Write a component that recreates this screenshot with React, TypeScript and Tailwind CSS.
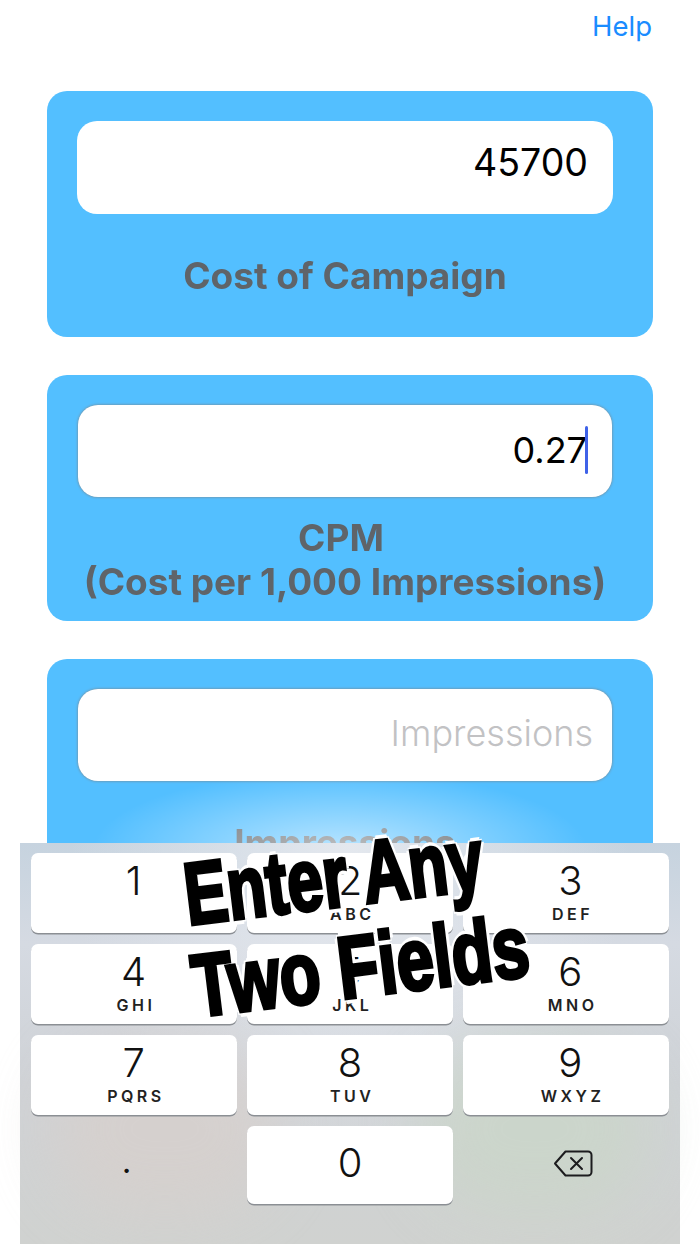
import React from 'react';

const font = "font-['Inter','Noto_Sans',sans-serif]";

const keys = [
  [['1', ''], ['2', 'ABC'], ['3', 'DEF']],
  [['4', 'GHI'], ['5', 'JKL'], ['6', 'MNO']],
  [['7', 'PQRS'], ['8', 'TUV'], ['9', 'WXYZ']],
];

// the glyphs sit a little right of centre in the outer keys
const colShift = ['', '', 'pl-[8px]'];

const Key: React.FC<{ digit: string; letters: string; col: number }> = ({ digit, letters, col }) => (
  <div className={`flex h-[80px] flex-col items-center rounded-[7px] bg-white shadow-[0_1.5px_0_#8b8f94] ${colShift[col]}`}>
    <span className="mt-[4px] h-[48px] text-[40px] leading-[48px] font-light text-[#111]">{digit}</span>
    <span className="pl-[4.5px] text-[16px] leading-[18px] font-semibold tracking-[3.5px] text-[#222]">{letters}</span>
  </div>
);

const Card: React.FC<{ children: React.ReactNode; field: React.ReactNode; first?: boolean }> = ({ children, field, first }) => (
  <div className={`h-[246px] rounded-[20px] bg-[#53bfff] pt-[30px] ${first ? 'pr-[40px] pl-[30px]' : 'pr-[41px] pl-[31px]'}`}>
    <div
      className={`flex items-center justify-end rounded-[20px] bg-white ${
        first ? 'h-[93px] pr-[25px]' : 'h-[92px] shadow-[0_0_3px_#808080]'
      }`}
    >
      {field}
    </div>
    <div className="flex flex-col items-center text-center text-[37px] leading-[45px] font-bold whitespace-nowrap text-[#5f6469] blur-[0.5px]">
      {children}
    </div>
  </div>
);

export default function App() {
  return (
    <div className={`relative h-[1244px] w-[700px] overflow-hidden bg-white ${font}`}>
      <div className="flex h-[91px] justify-end pt-[8px] pr-[48px] text-[27.5px] leading-[36px] text-[#1a8cff]">Help</div>

      <div className="flex flex-col gap-[38px] px-[47px]">
        <Card first field={<span className="pb-[9px] text-[37.5px] text-black">45700</span>}>
          <span className="mt-[39px]">Cost of Campaign</span>
        </Card>
        <Card
          field={
            <span className="flex items-center pr-[24px] pb-[3px] text-[36px] text-black">
              0.27
              <span className="-ml-[2px] h-[48px] w-[3px] rounded-full bg-[#3f62e8]" />
            </span>
          }
        >
          <span className="mt-[18px] pr-[8px]">CPM</span>
          <span className="-mt-[1px]">(Cost per 1,000 Impressions)</span>
        </Card>
        <Card field={<span className="pr-[19px] pb-[4px] text-[36px] font-light text-[#c2c2c4]">Impressions</span>}>
          <span className="mt-[39px]">Impressions</span>
        </Card>
      </div>

      {/* glow behind the keyboard edge */}
      <div className="absolute top-[770px] left-[90px] h-[160px] w-[500px] bg-[radial-gradient(ellipse_at_center,rgba(255,255,255,0.6),rgba(255,255,255,0)_70%)]" />

      {/* keyboard */}
      <div className="absolute top-[843px] left-[20px] h-[401px] w-[660px] bg-[radial-gradient(ellipse_at_50%_0%,#e4e8ee_0%,rgba(228,232,238,0)_60%),linear-gradient(180deg,#c6d3df_0%,#d5dae2_25%,#cfd2d6_60%,#d0d2d0_100%)] px-[10.5px] pt-[10px]">
        <div className="absolute bottom-[30px] left-[30px] h-[170px] w-[230px] rounded-full bg-[#d8d0cc] opacity-70 blur-[30px]" />
        <div className="absolute right-[30px] bottom-[30px] h-[170px] w-[230px] rounded-full bg-[#cbd6c9] opacity-80 blur-[30px]" />
        <div className="relative flex flex-col gap-[11px]">
          {keys.map((row, i) => (
            <div key={i} className="grid grid-cols-3 gap-[10px]">
              {row.map(([d, l], col) => (
                <Key key={d} digit={d} letters={l} col={col} />
              ))}
            </div>
          ))}
          <div className="grid h-[78px] grid-cols-3 gap-[10px]">
            <div className="flex items-center justify-center pr-[14px] pb-[2px] text-[26px] leading-none font-bold text-[#111]">.</div>
            <div className="flex items-center justify-center rounded-[7px] bg-white pb-[4px] text-[40px] font-light text-[#111] shadow-[0_1.5px_0_#8b8f94]">0</div>
            <div className="flex items-center justify-center pb-[4px] pl-[14px]">
              <svg width="40" height="29" viewBox="0 0 40 28" fill="none" stroke="#1c1c1e" strokeWidth="2" strokeLinejoin="round" strokeLinecap="round">
                <path d="M12.5 2H35a3.5 3.5 0 0 1 3.5 3.5v17A3.5 3.5 0 0 1 35 26H12.5L2 14z" />
                <path d="M18 8.5l11 11M29 8.5l-11 11" />
              </svg>
            </div>
          </div>
        </div>
      </div>

      {/* promo caption */}
      <div className="absolute top-[830px] left-[97px] w-[500px] rotate-[-7deg] text-center font-['Liberation_Sans',sans-serif] text-[80px] leading-[92px] font-bold whitespace-nowrap text-black [-webkit-text-stroke:3.5px_black] [text-shadow:5px_0_0_white,-5px_0_0_white,0_5px_0_white,0_-5px_0_white,3px_3px_0_white,-3px_3px_0_white,3px_-3px_0_white,-3px_-3px_0_white]">
        <div className="[transform:translateX(-8px)_scale(0.8,1.1)]">Enter Any</div>
        <div className="[transform:translateX(8px)_scale(0.83,1.1)]">Two Fields</div>
      </div>
    </div>
  );
}
